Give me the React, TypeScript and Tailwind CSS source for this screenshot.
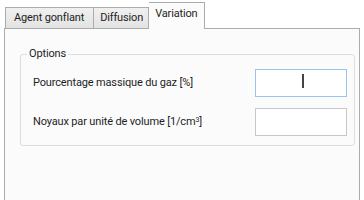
import React from "react";

export default function App() {
  const font = { fontFamily: 'Roboto, "Open Sans", sans-serif' };
  return (
    <div className="w-[364px] h-[200px] bg-white flex flex-col pt-[2px] pl-[4px] pr-[4px] overflow-hidden text-[11px] tracking-[-0.15px] text-[#1e1e1e]" style={font}>
      <div className="flex items-end h-[26px] pl-[1px] relative z-10">
        <div className="h-[21px] pl-[8px] pr-[9px] flex items-center border border-[#acacac] border-b-0 bg-gradient-to-b from-[#f0f0f0] to-[#e3e3e3]">Agent gonflant</div>
        <div className="h-[21px] pl-[6px] pr-[5px] flex items-center border border-[#acacac] border-b-0 border-l-0 bg-gradient-to-b from-[#f0f0f0] to-[#e3e3e3]">Diffusion</div>
        <div className="h-[27px] -mb-px px-[6px] pb-[4px] flex items-center border border-[#acacac] border-b-0 border-l-0 bg-[#fbfbfb]">Variation</div>
      </div>
      <div className="flex-1 border border-[#acacac] border-b-0 bg-[#fbfbfb] pl-[15px] pr-[4px] pt-[17px]">
        <fieldset className="border border-[#dcdfe2] rounded-[3px] pl-[12px] pr-[7px] pb-[9px] pt-[6px]">
          <legend className="px-[2px] ml-[-6px]">Options</legend>
          <div className="flex flex-col gap-[11px]">
            <div className="flex items-center justify-between">
              <span className="mt-[2px]">Pourcentage massique du gaz [%]</span>
              <div className="w-[92px] h-[28px] border border-[#99c4ee] bg-white flex items-center justify-center">
                <div className="w-[1.5px] h-[14px] bg-[#444] ml-[4px] mb-[3px]" />
              </div>
            </div>
            <div className="flex items-center justify-between">
              <span className="mt-[2px]">Noyaux par unité de volume [1/cm<sup className="text-[7px]">3</sup>]</span>
              <div className="w-[92px] h-[28px] border border-[#c8c8c8] bg-white" />
            </div>
          </div>
        </fieldset>
      </div>
    </div>
  );
}
